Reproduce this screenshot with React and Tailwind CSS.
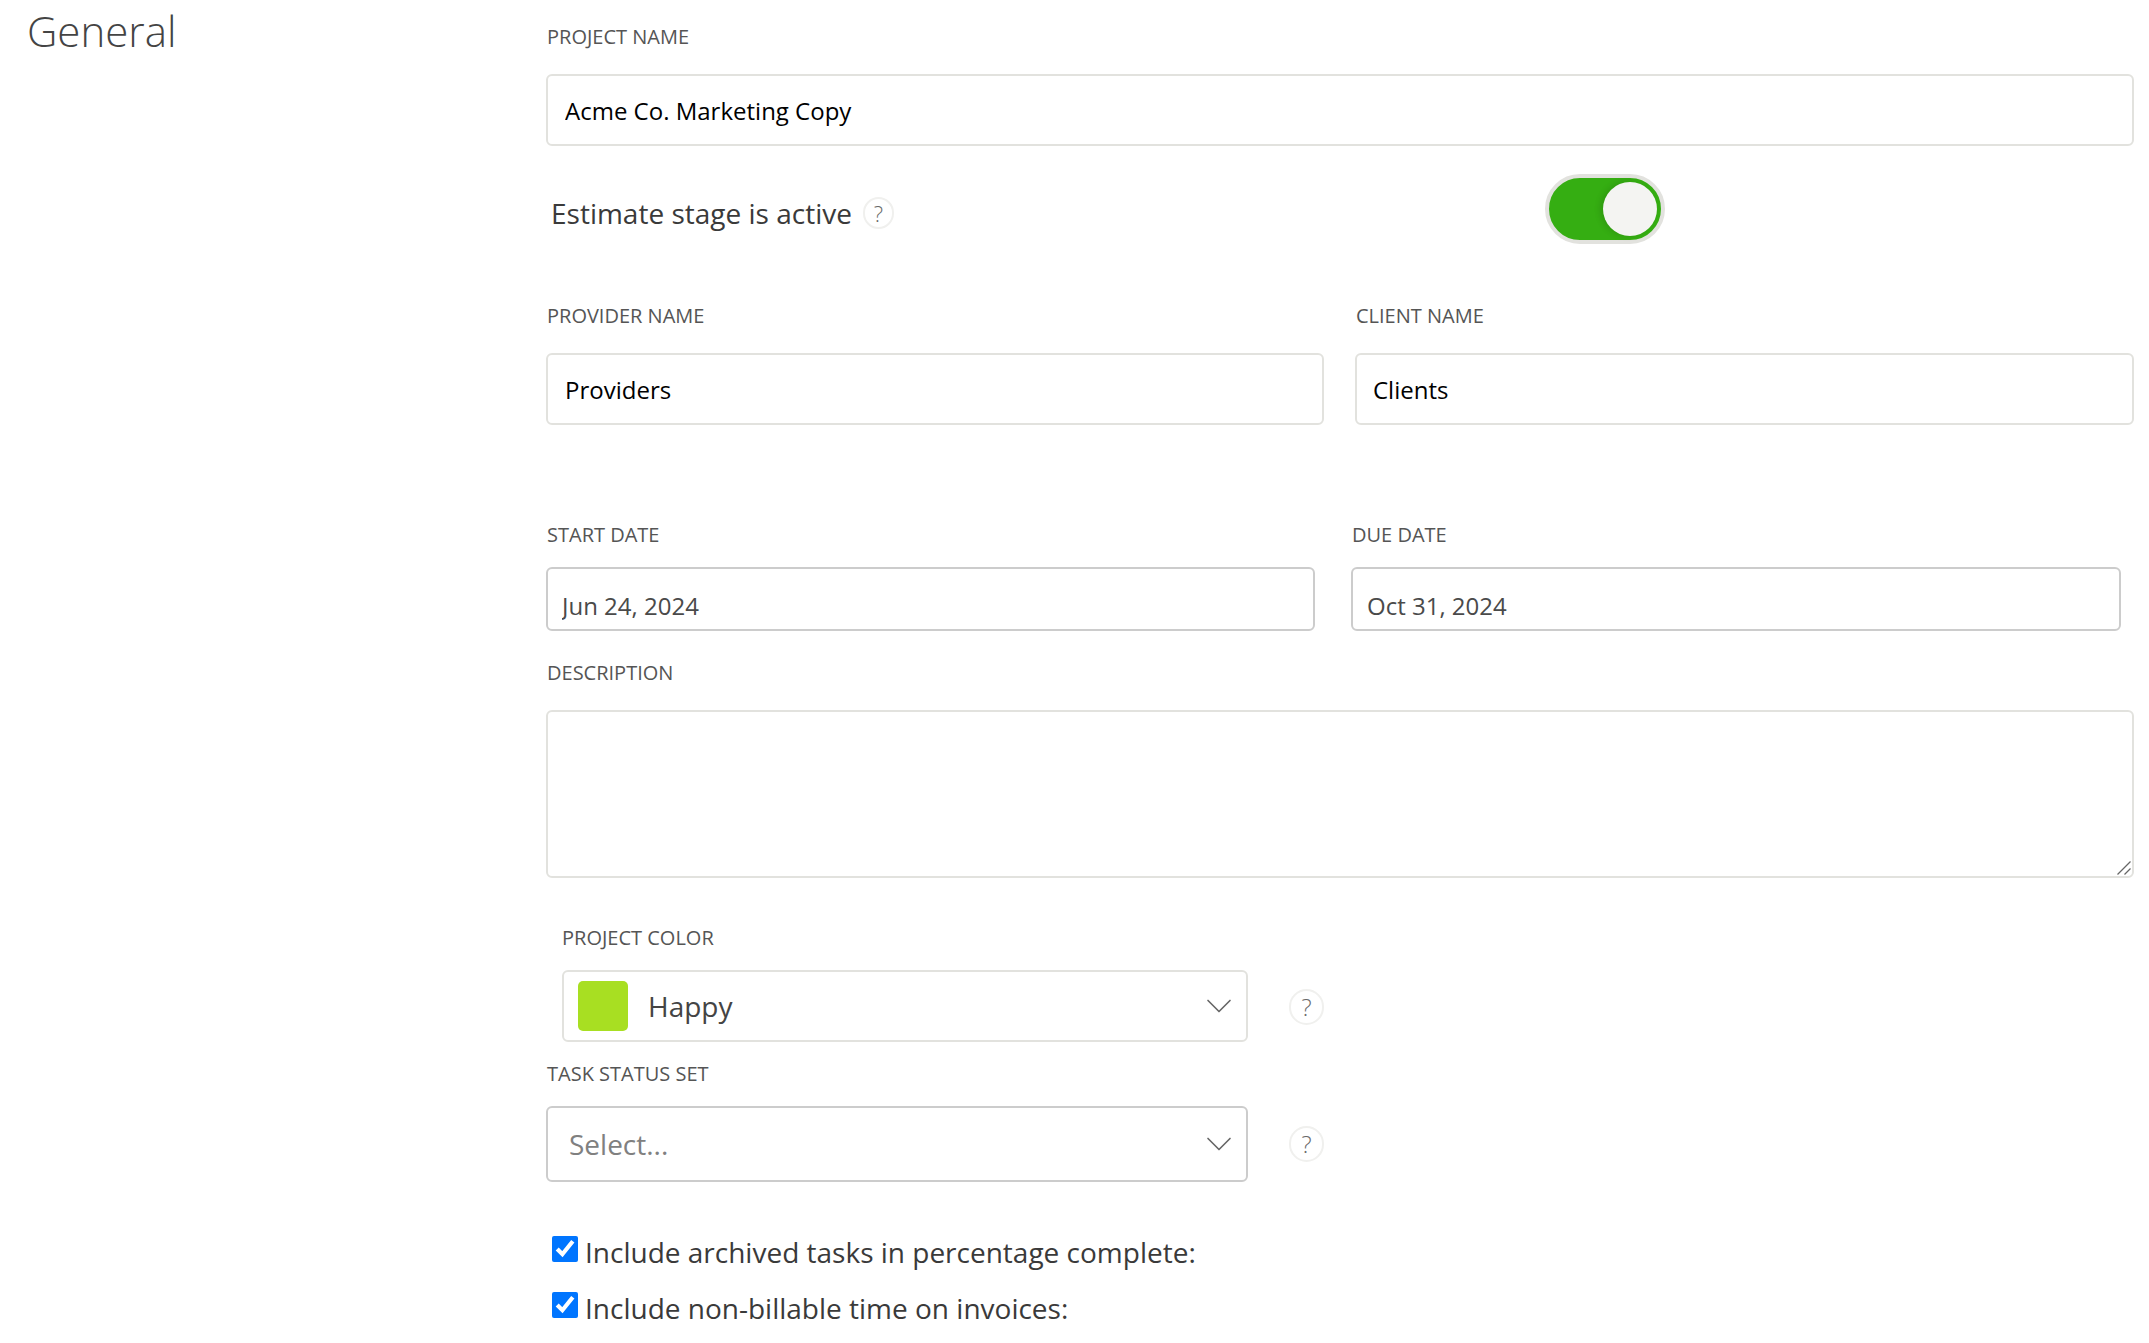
import { ChevronDown } from 'lucide-react';

const labelCls = 'block pl-px text-[20px] leading-[28px] text-[#555] font-normal';
const lightField = 'block w-full border-2 border-[#e2e2de] rounded-[6px] bg-white text-[24px] text-black outline-none';
const dateField = 'block w-full border-2 border-[#cccccc] rounded-[6px] bg-white pl-[14px] pt-[12px] text-[24px] text-[#4a4a4a] outline-none';

function Help({ className = '' }) {
  return (
    <span className={`flex shrink-0 items-center justify-center rounded-full border-2 border-[#f0f0ee] font-light text-[#6a6a6a] ${className}`}>
      ?
    </span>
  );
}

function Check({ children, className = '' }) {
  return (
    <label className={`flex h-[26px] items-center ${className}`}>
      <input type="checkbox" defaultChecked className="ml-[6px] h-[26px] w-[26px] shrink-0 accent-[#0075ff]" />
      <span className="ml-[7px] mt-[5px] whitespace-nowrap text-[28px] leading-[26px] text-[#3a3a3a]">{children}</span>
    </label>
  );
}

export default function App() {
  return (
    <div className="flex h-[1343px] overflow-hidden bg-white font-['Open_Sans',sans-serif]">
      <div className="w-[546px] shrink-0 pl-[27px]">
        <h1 className="text-[42px] font-light leading-[62px] text-[#444]">General</h1>
      </div>

      <div className="flex-1 pr-[15px] pt-[23px]">
        <label className={labelCls}>PROJECT NAME</label>
        <input defaultValue="Acme Co. Marketing Copy" className={`${lightField} mt-[23px] h-[72px] pl-[17px]`} />

        <div className="mt-[28px] flex h-[70px]">
          <div className="flex w-[999px] items-start pl-[5px] pt-[20px]">
            <span className="text-[28px] leading-[38px] text-[#3a3a3a]">Estimate stage is active</span>
            <Help className="ml-[11px] mt-[3px] h-[32px] w-[31px] text-[22px]" />
          </div>
          {/* toggle */}
          <div className="relative h-[70px] w-[120px] rounded-full border-4 border-[#e2e2de] bg-[#35ae12]">
            <span className="absolute right-[4px] top-[4px] h-[54px] w-[54px] rounded-full bg-[#f4f4f2] shadow-[-3px_0_6px_rgba(0,0,0,0.12)]" />
          </div>
        </div>

        <div className="mt-[58px] flex gap-[31px]">
          <div className="w-[778px]">
            <label className={labelCls}>PROVIDER NAME</label>
            <input defaultValue="Providers" className={`${lightField} mt-[23px] h-[72px] pl-[17px]`} />
          </div>
          <div className="flex-1">
            <label className={labelCls}>CLIENT NAME</label>
            <input defaultValue="Clients" className={`${lightField} mt-[23px] h-[72px] pl-[16px]`} />
          </div>
        </div>

        <div className="mt-[96px] flex gap-[36px] pr-[13px]">
          <div className="w-[769px]">
            <label className={labelCls}>START DATE</label>
            <input defaultValue="Jun 24, 2024" className={`${dateField} mt-[18px] h-[64px]`} />
          </div>
          <div className="flex-1">
            <label className={labelCls}>DUE DATE</label>
            <input defaultValue="Oct 31, 2024" className={`${dateField} mt-[18px] h-[64px]`} />
          </div>
        </div>

        <label className={`${labelCls} mt-[28px]`}>DESCRIPTION</label>
        <div className="relative mt-[23px]">
          <textarea className="block h-[168px] w-full resize-none rounded-[6px] border-2 border-[#e2e2de] outline-none" />
          {/* resize grip */}
          <svg width="14" height="14" viewBox="0 0 14 14" className="absolute bottom-[3px] right-[3px]" stroke="#666" strokeWidth="1.2">
            <path d="M0.5 13.5 L13.5 0.5" />
            <path d="M7.5 13.5 L13.5 7.5" />
          </svg>
        </div>

        <label className={`${labelCls} ml-[15px] mt-[46px]`}>PROJECT COLOR</label>
        <div className="ml-[16px] mt-[18px] flex items-center">
          <div className="flex h-[72px] w-[686px] items-center rounded-[6px] border-2 border-[#e2e2de] pl-[14px] pr-[5px]">
            <span className="h-[50px] w-[50px] rounded-[5px] bg-[#a8df22]" />
            <span className="ml-[20px] flex-1 text-[28px] text-[#444]">Happy</span>
            <ChevronDown size={44} strokeWidth={0.9} className="text-[#666]" />
          </div>
          <Help className="ml-[41px] mt-[2px] h-[36px] w-[35px] text-[24px]" />
        </div>

        <label className={`${labelCls} mt-[18px]`}>TASK STATUS SET</label>
        <div className="mt-[18px] flex items-center">
          <div className="flex h-[76px] w-[702px] items-center rounded-[6px] border-2 border-[#cccccc] pl-[21px] pr-[5px]">
            <span className="flex-1 text-[28px] text-[#808080]">Select...</span>
            <ChevronDown size={44} strokeWidth={0.9} className="text-[#666]" />
          </div>
          <Help className="ml-[41px] h-[36px] w-[35px] text-[24px]" />
        </div>

        <Check className="mt-[54px]">Include archived tasks in percentage complete:</Check>
        <Check className="mt-[30px]">Include non-billable time on invoices:</Check>
      </div>
    </div>
  );
}
